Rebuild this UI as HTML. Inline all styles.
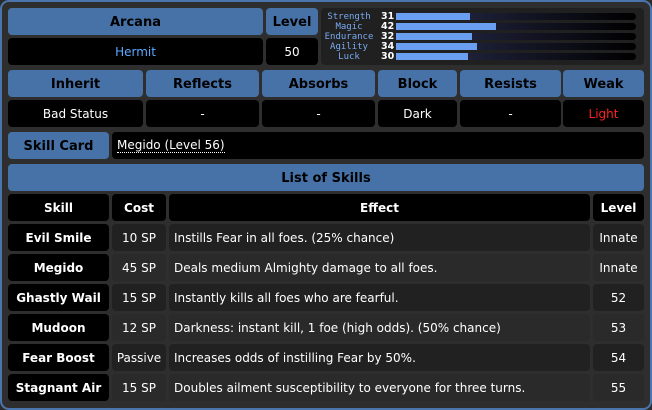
<!DOCTYPE html>
<html><head><style>
*{margin:0;padding:0;box-sizing:border-box}
body{width:652px;height:410px;background:#2b2b2b;font-family:"DejaVu Sans","Liberation Sans",sans-serif;font-size:12px;color:#fff;position:relative;overflow:hidden}
.frame{position:absolute;left:0;top:0;width:652px;height:410px;border:2px solid #4a74ac;border-radius:9px;background:#2e2e2e}
.c{position:absolute;border-radius:4px;display:flex;align-items:center;justify-content:center;white-space:nowrap;padding-top:1px}
.h{background:#4672a8;color:#000;font-weight:bold;font-size:13px}
.k{background:#000}
.d{background:#212121}
.l{background:#2a2a2a}
.b{font-weight:bold}
.st{position:absolute;left:321px;top:8px;width:323px;height:57px;background:#202020;border-radius:4px}
.lab{position:absolute;left:1px;width:54px;text-align:center;font-family:"DejaVu Sans Mono",monospace;font-size:9px;color:#7aaaf0;line-height:10px}
.num{position:absolute;left:60px;font-size:9.5px;font-weight:bold;line-height:10px;color:#fff}
.trk{position:absolute;left:75px;width:240px;height:7px;border-radius:4px;background:linear-gradient(90deg,#2a2e50,#000)}
.fill{position:absolute;left:0;top:0;height:7px;background:#6a9ef0}
</style></head><body>
<div class="frame"></div>
<div class="c h" style="left:8px;top:8px;width:255px;height:27px">Arcana</div>
<div class="c h" style="left:266px;top:8px;width:52px;height:27px">Level</div>
<div class="c k" style="left:8px;top:38px;width:255px;height:27px;color:#5aa8ff">Hermit</div>
<div class="c k" style="left:266px;top:38px;width:52px;height:27px">50</div>
<div class="st">
<div class="lab" style="top:4px">Strength</div><div class="num" style="top:4px">31</div><div class="trk" style="top:5px"><div class="fill" style="width:74px"></div></div>
<div class="lab" style="top:14px">Magic</div><div class="num" style="top:14px">42</div><div class="trk" style="top:15px"><div class="fill" style="width:100px"></div></div>
<div class="lab" style="top:24px">Endurance</div><div class="num" style="top:24px">32</div><div class="trk" style="top:25px"><div class="fill" style="width:76px"></div></div>
<div class="lab" style="top:34px">Agility</div><div class="num" style="top:34px">34</div><div class="trk" style="top:35px"><div class="fill" style="width:81px"></div></div>
<div class="lab" style="top:44px">Luck</div><div class="num" style="top:44px">30</div><div class="trk" style="top:45px"><div class="fill" style="width:72px"></div></div>
</div>
<div class="c h" style="left:8px;top:70px;width:135px;height:27px">Inherit</div>
<div class="c h" style="left:146px;top:70px;width:113px;height:27px">Reflects</div>
<div class="c h" style="left:262px;top:70px;width:113px;height:27px">Absorbs</div>
<div class="c h" style="left:378px;top:70px;width:79px;height:27px">Block</div>
<div class="c h" style="left:460px;top:70px;width:101px;height:27px">Resists</div>
<div class="c h" style="left:563px;top:70px;width:81px;height:27px">Weak</div>
<div class="c k" style="left:8px;top:100px;width:135px;height:27px">Bad Status</div>
<div class="c k" style="left:146px;top:100px;width:113px;height:27px">-</div>
<div class="c k" style="left:262px;top:100px;width:113px;height:27px">-</div>
<div class="c k" style="left:378px;top:100px;width:79px;height:27px">Dark</div>
<div class="c k" style="left:460px;top:100px;width:101px;height:27px">-</div>
<div class="c k" style="left:563px;top:100px;width:81px;height:27px;color:#ff2020">Light</div>
<div class="c h" style="left:8px;top:132px;width:101px;height:27px">Skill Card</div>
<div class="c k" style="left:112px;top:132px;width:532px;height:27px;justify-content:flex-start;padding-left:5px"><span style="border-bottom:1px dotted #fff;line-height:13px">Megido (Level 56)</span></div>
<div class="c h" style="left:8px;top:164px;width:636px;height:27px">List of Skills</div>
<div class="c k b" style="left:8px;top:194px;width:101px;height:27px">Skill</div>
<div class="c k b" style="left:112px;top:194px;width:54px;height:27px">Cost</div>
<div class="c k b" style="left:169px;top:194px;width:421px;height:27px">Effect</div>
<div class="c k b" style="left:593px;top:194px;width:51px;height:27px">Level</div>

<div class="c k b" style="left:8px;top:224px;width:101px;height:27px">Evil Smile</div>
<div class="c d" style="left:112px;top:224px;width:54px;height:27px">10 SP</div>
<div class="c d" style="left:169px;top:224px;width:421px;height:27px;justify-content:flex-start;padding-left:5px">Instills Fear in all foes. (25% chance)</div>
<div class="c d" style="left:593px;top:224px;width:51px;height:27px">Innate</div>

<div class="c k b" style="left:8px;top:254px;width:101px;height:27px">Megido</div>
<div class="c l" style="left:112px;top:254px;width:54px;height:27px">45 SP</div>
<div class="c l" style="left:169px;top:254px;width:421px;height:27px;justify-content:flex-start;padding-left:5px">Deals medium Almighty damage to all foes.</div>
<div class="c l" style="left:593px;top:254px;width:51px;height:27px">Innate</div>

<div class="c k b" style="left:8px;top:284px;width:101px;height:27px">Ghastly Wail</div>
<div class="c d" style="left:112px;top:284px;width:54px;height:27px">15 SP</div>
<div class="c d" style="left:169px;top:284px;width:421px;height:27px;justify-content:flex-start;padding-left:5px">Instantly kills all foes who are fearful.</div>
<div class="c d" style="left:593px;top:284px;width:51px;height:27px">52</div>

<div class="c k b" style="left:8px;top:314px;width:101px;height:27px">Mudoon</div>
<div class="c l" style="left:112px;top:314px;width:54px;height:27px">12 SP</div>
<div class="c l" style="left:169px;top:314px;width:421px;height:27px;justify-content:flex-start;padding-left:5px">Darkness: instant kill, 1 foe (high odds). (50% chance)</div>
<div class="c l" style="left:593px;top:314px;width:51px;height:27px">53</div>

<div class="c k b" style="left:8px;top:344px;width:101px;height:27px">Fear Boost</div>
<div class="c d" style="left:112px;top:344px;width:54px;height:27px">Passive</div>
<div class="c d" style="left:169px;top:344px;width:421px;height:27px;justify-content:flex-start;padding-left:5px">Increases odds of instilling Fear by 50%.</div>
<div class="c d" style="left:593px;top:344px;width:51px;height:27px">54</div>

<div class="c k b" style="left:8px;top:374px;width:101px;height:27px">Stagnant Air</div>
<div class="c l" style="left:112px;top:374px;width:54px;height:27px">15 SP</div>
<div class="c l" style="left:169px;top:374px;width:421px;height:27px;justify-content:flex-start;padding-left:5px">Doubles ailment susceptibility to everyone for three turns.</div>
<div class="c l" style="left:593px;top:374px;width:51px;height:27px">55</div>
</body></html>
